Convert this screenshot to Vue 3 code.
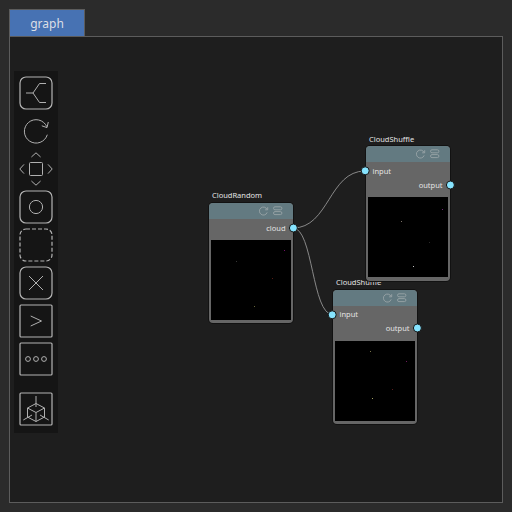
<script setup>
const nodes = [
  {
    id: 'lower', name: 'CloudShuffle', x: 333, y: 290, input: 'input', output: 'output',
    points: [[35, 10, '#77734a'], [71, 20, '#6d1a5c'], [57, 48, '#5a1d1d'], [37, 57, '#a3a163']],
  },
  {
    id: 'upper', name: 'CloudShuffle', x: 366, y: 146, input: 'input', output: 'output',
    points: [[33, 24, '#7d7368'], [74, 12, '#6c2a78'], [61, 45, '#2b2b2b'], [45, 69, '#c4c4c4']],
  },
  {
    id: 'random', name: 'CloudRandom', x: 209, y: 203, output: 'cloud',
    points: [[25, 21, '#363636'], [73, 10, '#73106b'], [61, 38, '#571c14'], [43, 66, '#66663a']],
  },
]
</script>

<template>
  <div class="app">
    <div class="tab">graph</div>
    <div class="panel">
      <nav class="toolbar">
        <svg class="tool" viewBox="0 0 38 38">
          <rect class="box" x="3" y="3" width="32" height="32" rx="6" />
          <path d="M9 19H16L22.5 9.5H29M16 19L22.5 28.5H29" />
        </svg>
        <svg class="tool" viewBox="0 0 38 38">
          <path d="M30.3 22.7A11.7 11.7 0 1 1 29.8 14.7M31.3 10L30 15.6L24.8 13.8" />
        </svg>
        <svg class="tool" viewBox="0 0 38 38">
          <rect x="12.5" y="12.5" width="13" height="13" rx="1" />
          <path d="M14.4 7L19 2.8L23.6 7M14.4 31L19 35.2L23.6 31M7 14.4L2.8 19L7 23.6M31 14.4L35.2 19L31 23.6" />
        </svg>
        <svg class="tool" viewBox="0 0 38 38">
          <rect class="box" x="3" y="3" width="32" height="32" rx="6" />
          <circle cx="19" cy="19" r="6.6" />
        </svg>
        <svg class="tool" viewBox="0 0 38 38">
          <rect class="box dashed" x="3" y="3" width="32" height="32" rx="6" />
        </svg>
        <svg class="tool" viewBox="0 0 38 38">
          <rect class="box" x="3" y="3" width="32" height="32" rx="6" />
          <path d="M12 12L26 26M26 12L12 26" />
        </svg>
        <svg class="tool" viewBox="0 0 38 38">
          <rect class="box" x="3" y="3" width="32" height="32" rx="1" />
          <path d="M13.7 14L24.5 19L13.7 24" />
        </svg>
        <svg class="tool" viewBox="0 0 38 38">
          <rect class="box" x="3" y="3" width="32" height="32" rx="1" />
          <circle cx="11" cy="19" r="2.4" />
          <circle cx="19" cy="19" r="2.4" />
          <circle cx="27" cy="19" r="2.4" />
        </svg>
        <svg class="tool spaced" viewBox="0 0 38 38">
          <rect class="box" x="3" y="3" width="32" height="32" rx="1" />
          <path d="M19 13.5L27.5 18V27L19 31.5L10.5 27V18ZM10.5 18L19 22.5L27.5 18M19 22.5V31.5M19 6V17M6.3 30L15 25M31.7 30L23 25" />
        </svg>
      </nav>
    </div>

    <svg class="edges" viewBox="0 0 512 512">
      <path d="M293 228C329 228 329 171 365 171" />
      <path d="M293 228C313 228 312 314.5 332.5 314.5" />
    </svg>

    <article v-for="node in nodes" :key="node.id" class="node" :class="node.id" :style="{ left: node.x + 'px', top: node.y + 'px' }">
      <div class="title">{{ node.name }}</div>
      <header class="head">
        <svg class="glyph" viewBox="0 0 10 10">
          <path d="M8.2 6.4A4 4 0 1 1 8.1 3.5M8.7 1.2V3.8H6.1" />
        </svg>
        <svg class="glyph" viewBox="0 0 10 10">
          <rect x="0.5" y="0.8" width="8.4" height="3" rx="1.5" />
          <rect x="0.5" y="5.6" width="8.4" height="3" rx="1.5" />
        </svg>
      </header>
      <div v-if="node.input" class="row in">{{ node.input }}<svg class="port" viewBox="0 0 10 10"><circle cx="5.2" cy="4.8" r="4" /></svg></div>
      <div class="row out">{{ node.output }}<svg class="port" viewBox="0 0 10 10"><circle cx="5.4" cy="5" r="4" /></svg></div>
      <svg class="preview" viewBox="0 0 80 80">
        <rect v-for="(p, i) in node.points" :key="i" :x="p[0]" :y="p[1]" width="1" height="1" :fill="p[2]" />
      </svg>
    </article>
  </div>
</template>

<style>
body {
  background: #2b2b2b;
}
</style>

<style scoped>
.app {
  position: relative;
  box-sizing: border-box;
  width: 512px;
  height: 512px;
  padding: 9px;
  overflow: hidden;
  background: #2b2b2b;
  font-family: "Noto Sans", sans-serif;
  color: #e4e4e4;
}
.tab {
  box-sizing: border-box;
  width: 76px;
  height: 27px;
  border: 1px solid #5c5c5c;
  border-bottom: 0;
  background: #4772b3;
  font-size: 12px;
  line-height: 28px;
  text-align: center;
  color: #dcdfe6;
}
.panel {
  box-sizing: border-box;
  width: 494px;
  height: 467px;
  padding: 34px 4px;
  border: 1px solid #5c5c5c;
  background: #1e1e1e;
}
.toolbar {
  display: flex;
  flex-direction: column;
  box-sizing: border-box;
  width: 44px;
  height: 362px;
  padding: 3px;
  background: #151515;
}
.tool {
  flex: none;
  width: 38px;
  height: 38px;
  fill: none;
  stroke: #b0b0b0;
  stroke-width: 1;
}
.tool .box {
  stroke: #b4b4b4;
  stroke-width: 1.2;
}
.tool .dashed {
  stroke-dasharray: 4 2;
}
.spaced {
  margin-top: 12px;
}
.edges {
  position: absolute;
  inset: 0;
  width: 512px;
  height: 512px;
  fill: none;
  stroke: #888;
  stroke-width: 1;
}
.node {
  position: absolute;
  box-sizing: border-box;
  width: 84px;
  padding-bottom: 3px;
  border-radius: 4px;
  background: #666;
  box-shadow: 0 0 0 1px #121212;
}
.title {
  position: absolute;
  left: 3px;
  top: -13px;
  font-size: 7.5px;
  line-height: 11px;
  white-space: nowrap;
}
.head {
  display: flex;
  justify-content: flex-end;
  gap: 4px;
  box-sizing: border-box;
  height: 16px;
  padding: 3px 10px 0 0;
  border-radius: 4px 4px 0 0;
  background: #637a81;
}
.glyph {
  width: 10px;
  height: 10px;
  fill: none;
  stroke: #98a4a7;
  stroke-width: 0.9;
}
.row {
  position: relative;
  font-size: 7.5px;
  line-height: 18px;
}
.in {
  height: 13px;
  padding-left: 6.5px;
  line-height: 17px;
}
.out {
  height: 21px;
  padding-right: 7.5px;
  text-align: right;
}
.in + .out {
  height: 22px;
}
.port {
  position: absolute;
  top: 4px;
  width: 10px;
  height: 10px;
  overflow: visible;
  fill: #86e4ff;
  stroke: #161616;
  stroke-width: 1;
}
.in .port {
  left: -6px;
}
.out .port {
  right: -5px;
}
.preview {
  display: block;
  width: 80px;
  height: 80px;
  margin-left: 2px;
  background: #000;
}
.upper {
  padding-bottom: 4px;
}
.upper .title {
  top: -12px;
}
.upper .in {
  line-height: 19px;
}
.upper .out {
  line-height: 20px;
}
.upper .out .port {
  top: 5px;
}
</style>
